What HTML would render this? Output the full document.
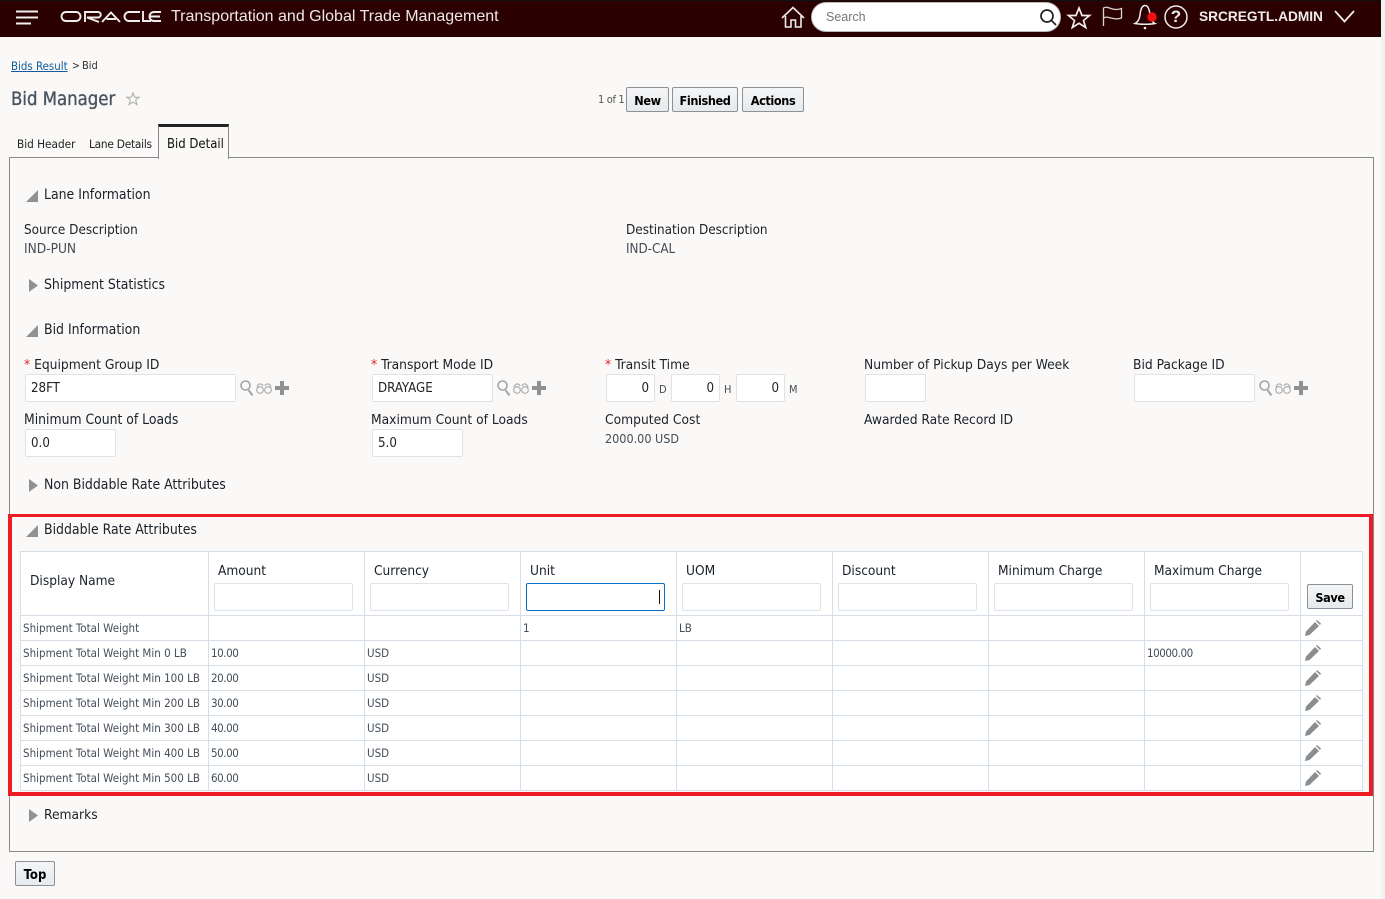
<!DOCTYPE html>
<html><head><meta charset="utf-8"><title>Bid Manager</title>
<style>
html,body{margin:0;padding:0;background:#faf9f7;width:1385px;height:899px;overflow:hidden}
body{position:relative;font-family:"DejaVu Sans Condensed","Noto Sans CJK SC","Liberation Sans",sans-serif;color:#1a2129}
.t{position:absolute;white-space:nowrap;line-height:18px;font-size:13.7px}
.s{color:#444e58;font-size:12.5px}
.h{font-size:13.9px;color:#1a2129}
.i{position:absolute;box-sizing:border-box;background:#fff;border:1px solid #dfe3e6;border-radius:2px;font-size:13.2px;line-height:28px;padding:0 5px;color:#222;height:28px}
.b{position:absolute;box-sizing:border-box;height:25px;border:1px solid #8d9194;border-radius:2px;background:linear-gradient(#f4f5f6,#e6eaed);font-weight:bold;font-size:12.6px;letter-spacing:-.4px;line-height:26px;text-align:center;color:#000}
.r{color:#e0202a}
svg{position:absolute;overflow:visible}
table{position:absolute;left:20px;top:551px;width:1342px;border-collapse:collapse;table-layout:fixed;background:#fff}
td,th{border:1px solid #d6dfe7;padding:0 0 0 2px;font-size:11.5px;font-weight:normal;color:#444e58;height:24px;line-height:14px;white-space:nowrap;overflow:hidden}
tr.hd td{height:63px}
.n{letter-spacing:-.45px}
.hdt{position:absolute;font-size:13.6px;color:#1a2129;line-height:18px;white-space:nowrap}
</style></head><body>

<div style="position:absolute;left:1381px;top:0;width:4px;height:899px;background:#f1f1f1"></div>
<div style="position:absolute;left:0;top:0;width:1381px;height:37px;background:#2a0000;border-top:1px solid #111;box-sizing:border-box"></div>
<svg style="left:16px;top:10px" width="22" height="15"><path d="M0 1.500H22M0 7.500H22M0 13.500H15" stroke="#f3f0ee" stroke-width="2"/></svg>
<svg style="left:60px;top:10px" width="102" height="14" fill="none" stroke="#eee" stroke-width="1.900"><path d="M6 2H16A4.500 4.500 0 0 1 16 11H6A4.500 4.500 0 0 1 6 2Z"/><path d="M25 12V2H38A2.700 2.700 0 0 1 38 7.500H27L39 12"/><path d="M42 12L51 2.500L60 12M46.500 9H56"/><path d="M80 2H69A4.500 4.500 0 0 0 69 11H80"/><path d="M83 1V11H91"/><path d="M101 2H94A4.500 4.500 0 0 0 94 11H101M89 6.500H100"/></svg>
<div class="t" style="left:171px;top:8px;font-family:'Liberation Sans',sans-serif;font-size:16px;color:#ece8e6">Transportation and Global Trade Management</div>

<svg style="left:781px;top:6px" width="24" height="22" fill="none" stroke="#f0ecea" stroke-width="1.600"><path d="M1 12L12 1.500L23 12M4.500 10V21H10V14H14.500V21H20V10"/></svg>
<div style="position:absolute;left:811px;top:2px;width:250px;height:30px;border-radius:15px;background:#fff;border:1px solid #bbb;box-sizing:border-box"></div>
<div class="t" style="left:826px;top:8px;font-size:12.500px;color:#777;font-family:'Liberation Sans',sans-serif">Search</div>
<svg style="left:1039px;top:8px" width="18" height="18" fill="none" stroke="#222" stroke-width="1.700"><circle cx="8" cy="8" r="6"/><path d="M12.500 12.500L17 17"/></svg>
<svg style="left:1067px;top:6px" width="24" height="23" fill="none" stroke="#f0ecea" stroke-width="1.700"><path d="M12 2L15 9.500H22.500L16.500 14.500L18.700 21.500L12 17.300L5.300 21.500L7.500 14.500L1.500 9.500H9Z"/></svg>
<svg style="left:1102px;top:6px" width="22" height="21" fill="none" stroke="#d9d3d0" stroke-width="1.300"><path d="M1.500 20V2C6 -1 10 6 19.500 2.500V12C11 15 6 9 1.500 12"/></svg>
<svg style="left:1134px;top:4px" width="24" height="27" fill="none" stroke="#f0ecea" stroke-width="1.500"><path d="M1 19.500C4 18 5.500 15 6 11C6.500 6 8 1.500 11 1.500C14 1.500 15.500 6 16 11C16.500 15 18 18 21 19.500C16 20.500 6 20.500 1 19.500Z"/><circle cx="11" cy="24" r="1.300" fill="#f0ecea" stroke="none"/><circle cx="18" cy="13" r="4.700" fill="#f01010" stroke="none"/></svg>
<svg style="left:1164px;top:5px" width="25" height="25" fill="none" stroke="#f0ecea" stroke-width="1.500"><circle cx="12" cy="12" r="11"/></svg>
<div class="t" style="left:1164px;top:7px;width:24px;text-align:center;font:bold 17px/20px 'Liberation Sans',sans-serif;color:#f0ecea">?</div>
<div class="t" style="left:1199px;top:8px;font:bold 13.700px/18px 'Liberation Sans',sans-serif;color:#f0ecea">SRCREGTL.ADMIN</div>
<svg style="left:1334px;top:10px" width="21" height="13" fill="none" stroke="#f0ecea" stroke-width="1.800"><path d="M1 1L10.500 11.500L20 1"/></svg>

<div class="t" style="left:11px;top:57px;font-size:11.400px;color:#145c9e;text-decoration:underline">Bids Result</div>
<div class="t" style="left:72px;top:57px;font-size:10.500px;color:#333">&gt;</div>
<div class="t" style="left:82px;top:57px;font-size:11px;color:#333">Bid</div>
<div class="t" style="left:11px;top:88px;font-size:18.400px;line-height:24px;color:#4a5560;-webkit-text-stroke:.35px #4a5560">Bid Manager</div>
<svg style="left:126px;top:92px" width="14" height="14" fill="none" stroke="#aaa"><path d="M7 1L8.700 5.200H13.200L9.600 8L11 12.700L7 10L3 12.700L4.400 8L.8 5.200H5.300Z"/></svg>

<div class="t" style="left:598px;top:91px;font-size:11px;letter-spacing:-.35px;color:#555">1 of 1</div>
<div class="b" style="left:626px;top:87px;width:43px">New</div>
<div class="b" style="left:672px;top:87px;width:66px">Finished</div>
<div class="b" style="left:742px;top:87px;width:62px">Actions</div>

<div style="position:absolute;left:9px;top:157px;width:1365px;height:695px;box-sizing:border-box;border:1px solid #8a8a8a"></div>
<div class="t" style="left:17px;top:135px;font-size:11.700px;color:#222">Bid Header</div>
<div class="t" style="left:89px;top:135px;font-size:11.800px;letter-spacing:-.25px;color:#222">Lane Details</div>
<div style="position:absolute;left:158px;top:124px;width:71px;height:35px;box-sizing:border-box;background:#faf9f7;border:1px solid #8a8a8a;border-top:3px solid #222;border-bottom:0"></div>
<div class="t" style="left:167px;top:136px;font-size:13px;color:#111">Bid Detail</div>

<svg style="left:26px;top:190px" width="12" height="12"><path d="M12 0V12H0Z" fill="#8f9295"/></svg>
<div class="t h" style="left:44px;top:186px">Lane Information</div>
<div class="t" style="left:24px;top:222px;font-size:13.400px">Source Description</div>
<div class="t s" style="left:24px;top:240px;font-size:13.600px">IND-PUN</div>
<div class="t" style="left:626px;top:222px;font-size:13.400px">Destination Description</div>
<div class="t s" style="left:626px;top:241px;font-size:13.300px">IND-CAL</div>

<svg style="left:29px;top:279px" width="9" height="13"><path d="M0 0L9 6.500L0 13Z" fill="#8f9295"/></svg>
<div class="t h" style="left:44px;top:276px">Shipment Statistics</div>

<svg style="left:26px;top:325px" width="12" height="12"><path d="M12 0V12H0Z" fill="#8f9295"/></svg>
<div class="t h" style="left:44px;top:321px">Bid Information</div>

<div class="t" style="left:24px;top:356px"><span class="r">*</span>&nbsp;Equipment Group ID</div>
<div class="i" style="left:25px;top:374px;width:211px">28FT</div>
<svg style="left:240px;top:380px" width="14" height="17" fill="none" stroke="#a3a6a8" stroke-width="1.600"><circle cx="5.500" cy="5.500" r="4.500"/><path d="M8.500 10L12.500 15.500" stroke-width="2"/></svg>
<svg style="left:256px;top:382px" width="16" height="12" fill="none" stroke="#aaa" stroke-width="1.100"><circle cx="4" cy="8" r="3.300"/><circle cx="12" cy="8" r="3.300"/><path d="M1 5.500C2 1 6 1 7 4M9 4C10 1 14 1 15 5.500"/></svg>
<svg style="left:275px;top:381px" width="14" height="14"><path d="M5 0H9V5H14V9H9V14H5V9H0V5H5Z" fill="#8f9295"/></svg>

<div class="t" style="left:371px;top:356px"><span class="r">*</span>&nbsp;Transport Mode ID</div>
<div class="i" style="left:372px;top:374px;width:121px">DRAYAGE</div>
<svg style="left:497px;top:380px" width="14" height="17" fill="none" stroke="#a3a6a8" stroke-width="1.600"><circle cx="5.500" cy="5.500" r="4.500"/><path d="M8.500 10L12.500 15.500" stroke-width="2"/></svg>
<svg style="left:513px;top:382px" width="16" height="12" fill="none" stroke="#aaa" stroke-width="1.100"><circle cx="4" cy="8" r="3.300"/><circle cx="12" cy="8" r="3.300"/><path d="M1 5.500C2 1 6 1 7 4M9 4C10 1 14 1 15 5.500"/></svg>
<svg style="left:532px;top:381px" width="14" height="14"><path d="M5 0H9V5H14V9H9V14H5V9H0V5H5Z" fill="#8f9295"/></svg>

<div class="t" style="left:605px;top:356px"><span class="r">*</span>&nbsp;Transit Time</div>
<div class="i" style="left:606px;top:374px;width:49px;text-align:right">0</div>
<div class="t s" style="left:659px;top:381px;font-size:11px">D</div>
<div class="i" style="left:671px;top:374px;width:49px;text-align:right">0</div>
<div class="t s" style="left:724px;top:381px;font-size:11px">H</div>
<div class="i" style="left:736px;top:374px;width:49px;text-align:right">0</div>
<div class="t s" style="left:789px;top:381px;font-size:11px">M</div>

<div class="t" style="left:864px;top:356px">Number of Pickup Days per Week</div>
<div class="i" style="left:865px;top:374px;width:61px"></div>
<div class="t" style="left:1133px;top:356px">Bid Package ID</div>
<div class="i" style="left:1134px;top:374px;width:121px"></div>
<svg style="left:1259px;top:380px" width="14" height="17" fill="none" stroke="#a3a6a8" stroke-width="1.600"><circle cx="5.500" cy="5.500" r="4.500"/><path d="M8.500 10L12.500 15.500" stroke-width="2"/></svg>
<svg style="left:1275px;top:382px" width="16" height="12" fill="none" stroke="#aaa" stroke-width="1.100"><circle cx="4" cy="8" r="3.300"/><circle cx="12" cy="8" r="3.300"/><path d="M1 5.500C2 1 6 1 7 4M9 4C10 1 14 1 15 5.500"/></svg>
<svg style="left:1294px;top:381px" width="14" height="14"><path d="M5 0H9V5H14V9H9V14H5V9H0V5H5Z" fill="#8f9295"/></svg>

<div class="t" style="left:24px;top:411px;font-size:13.800px">Minimum Count of Loads</div>
<div class="i" style="left:25px;top:429px;width:91px">0.0</div>
<div class="t" style="left:371px;top:411px;font-size:13.700px">Maximum Count of Loads</div>
<div class="i" style="left:372px;top:429px;width:91px">5.0</div>
<div class="t" style="left:605px;top:411px">Computed Cost</div>
<div class="t s" style="left:605px;top:430px">2000.00 USD</div>
<div class="t" style="left:864px;top:411px">Awarded Rate Record ID</div>

<svg style="left:29px;top:479px" width="9" height="13"><path d="M0 0L9 6.500L0 13Z" fill="#8f9295"/></svg>
<div class="t h" style="left:44px;top:476px">Non Biddable Rate Attributes</div>

<svg style="left:26px;top:525px" width="12" height="12"><path d="M12 0V12H0Z" fill="#8f9295"/></svg>
<div class="t h" style="left:44px;top:521px">Biddable Rate Attributes</div>

<table>
<colgroup><col style="width:188px"><col style="width:156px"><col style="width:156px"><col style="width:156px"><col style="width:156px"><col style="width:156px"><col style="width:156px"><col style="width:156px"><col style="width:62px"></colgroup>
<tr class="hd"><td></td><td></td><td></td><td></td><td></td><td></td><td></td><td></td><td></td></tr>
<tr><td>Shipment Total Weight</td><td></td><td></td><td class="n">1</td><td>LB</td><td></td><td></td><td></td><td></td></tr>
<tr><td>Shipment Total Weight Min 0 LB</td><td class="n">10.00</td><td>USD</td><td></td><td></td><td></td><td></td><td class="n">10000.00</td><td></td></tr>
<tr><td>Shipment Total Weight Min 100 LB</td><td class="n">20.00</td><td>USD</td><td></td><td></td><td></td><td></td><td></td><td></td></tr>
<tr><td>Shipment Total Weight Min 200 LB</td><td class="n">30.00</td><td>USD</td><td></td><td></td><td></td><td></td><td></td><td></td></tr>
<tr><td>Shipment Total Weight Min 300 LB</td><td class="n">40.00</td><td>USD</td><td></td><td></td><td></td><td></td><td></td><td></td></tr>
<tr><td>Shipment Total Weight Min 400 LB</td><td class="n">50.00</td><td>USD</td><td></td><td></td><td></td><td></td><td></td><td></td></tr>
<tr><td>Shipment Total Weight Min 500 LB</td><td class="n">60.00</td><td>USD</td><td></td><td></td><td></td><td></td><td></td><td></td></tr>
</table>

<div class="hdt" style="left:30px;top:572px">Display Name</div>
<div class="hdt" style="left:218px;top:562px">Amount</div><div class="i" style="left:214px;top:583px;width:139px"></div>
<div class="hdt" style="left:374px;top:562px">Currency</div><div class="i" style="left:370px;top:583px;width:139px"></div>
<div class="hdt" style="left:530px;top:562px">Unit</div><div class="i" style="left:526px;top:583px;width:139px;border-color:#0b6fc5"></div>
<div style="position:absolute;left:659px;top:590px;width:1px;height:14px;background:#111"></div>
<div class="hdt" style="left:686px;top:562px">UOM</div><div class="i" style="left:682px;top:583px;width:139px"></div>
<div class="hdt" style="left:842px;top:562px">Discount</div><div class="i" style="left:838px;top:583px;width:139px"></div>
<div class="hdt" style="left:998px;top:562px">Minimum Charge</div><div class="i" style="left:994px;top:583px;width:139px"></div>
<div class="hdt" style="left:1154px;top:562px">Maximum Charge</div><div class="i" style="left:1150px;top:583px;width:139px"></div>
<div class="b" style="left:1307px;top:584px;width:46px">Save</div>

<svg style="left:1305px;top:620px" width="16" height="16"><path d="M10 2L14 6L4.500 15L0 16L1 11.500ZM11 1L12 0L16 3.500L15 5Z" fill="#8b8e90"/></svg>
<svg style="left:1305px;top:645px" width="16" height="16"><path d="M10 2L14 6L4.500 15L0 16L1 11.500ZM11 1L12 0L16 3.500L15 5Z" fill="#8b8e90"/></svg>
<svg style="left:1305px;top:670px" width="16" height="16"><path d="M10 2L14 6L4.500 15L0 16L1 11.500ZM11 1L12 0L16 3.500L15 5Z" fill="#8b8e90"/></svg>
<svg style="left:1305px;top:695px" width="16" height="16"><path d="M10 2L14 6L4.500 15L0 16L1 11.500ZM11 1L12 0L16 3.500L15 5Z" fill="#8b8e90"/></svg>
<svg style="left:1305px;top:720px" width="16" height="16"><path d="M10 2L14 6L4.500 15L0 16L1 11.500ZM11 1L12 0L16 3.500L15 5Z" fill="#8b8e90"/></svg>
<svg style="left:1305px;top:745px" width="16" height="16"><path d="M10 2L14 6L4.500 15L0 16L1 11.500ZM11 1L12 0L16 3.500L15 5Z" fill="#8b8e90"/></svg>
<svg style="left:1305px;top:770px" width="16" height="16"><path d="M10 2L14 6L4.500 15L0 16L1 11.500ZM11 1L12 0L16 3.500L15 5Z" fill="#8b8e90"/></svg>

<div style="position:absolute;left:8px;top:514px;width:1365px;height:282px;box-sizing:border-box;border:solid #ed1c24;border-width:3px 4px 4px 4px"></div>

<svg style="left:29px;top:809px" width="9" height="13"><path d="M0 0L9 6.500L0 13Z" fill="#8f9295"/></svg>
<div class="t h" style="left:44px;top:806px;font-size:13.700px">Remarks</div>
<div class="b" style="left:15px;top:861px;width:40px;font-size:13px;letter-spacing:0;line-height:27px">Top</div>
</body></html>
